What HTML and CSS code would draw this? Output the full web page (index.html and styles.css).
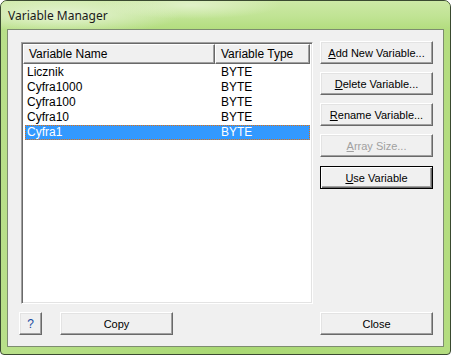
FILE: index.html
```html
<!DOCTYPE html>
<html>
<head>
    <title>Variable Manager</title>
    <link rel="stylesheet" href="styles.css">
</head>
<body>
    <div class="window">
        <div class="titlebar">Variable Manager</div>
        <div class="client">
            <div class="main">
                <div class="listbox">
                    <div class="list-header">
                        <div class="col-name">Variable Name</div>
                        <div class="col-type">Variable Type</div>
                    </div>
                    <div class="row"><span class="cell-name">Licznik</span><span class="cell-type">BYTE</span></div>
                    <div class="row"><span class="cell-name">Cyfra1000</span><span class="cell-type">BYTE</span></div>
                    <div class="row"><span class="cell-name">Cyfra100</span><span class="cell-type">BYTE</span></div>
                    <div class="row"><span class="cell-name">Cyfra10</span><span class="cell-type">BYTE</span></div>
                    <div class="row selected"><span class="cell-name">Cyfra1</span><span class="cell-type">BYTE</span></div>
                </div>
                <div class="actions">
                    <button class="btn"><u>A</u>dd New Variable...</button>
                    <button class="btn"><u>D</u>elete Variable...</button>
                    <button class="btn"><u>R</u>ename Variable...</button>
                    <button class="btn disabled"><u>A</u>rray Size...</button>
                    <button class="btn default"><u>U</u>se Variable</button>
                </div>
            </div>
            <div class="footer">
                <button class="btn help">?</button>
                <button class="btn copy">Copy</button>
                <div class="spacer"></div>
                <button class="btn close">Close</button>
            </div>
        </div>
    </div>
</body>
</html>
```

FILE: styles.css
```css
html, body {
    margin: 0;
    padding: 0;
    background-color: #ffffff;
}

.window {
    width: 451px;
    height: 355px;
    box-sizing: border-box;
    border: 1px solid #3a4a30;
    border-radius: 7px 7px 4px 4px;
    background: linear-gradient(90deg, #b9e08a 0%, #a9d873 50%, #b4dd80 100%);
    display: flex;
    flex-direction: column;
    overflow: hidden;
    font-family: "Liberation Sans", Arial, sans-serif;
}

.titlebar {
    height: 28px;
    padding-left: 7px;
    line-height: 29px;
    font-family: "Noto Sans", "DejaVu Sans", sans-serif;
    font-size: 12px;
    color: #1a1a1a;
    background:
        radial-gradient(ellipse 120px 20px at 60px 14px, rgba(235, 246, 220, 0.9), rgba(235, 246, 220, 0)),
        radial-gradient(ellipse 90px 14px at 190px 4px, rgba(230, 244, 210, 0.8), rgba(230, 244, 210, 0)),
        linear-gradient(180deg, #cde9a6 0%, #bfe392 60%, #b3dd7f 100%);
}

.client {
    flex: 1;
    margin: 0 6px 7px 6px;
    border: 1px solid #7d8c70;
    background-color: #f0f0f0;
    padding: 12px 10px 11px 13px;
    display: flex;
    flex-direction: column;
}

.main {
    flex: 1;
    display: flex;
    gap: 7px;
}

.listbox {
    width: 292px;
    box-sizing: border-box;
    background-color: #ffffff;
    border-top: 1px solid #a0a0a0;
    border-left: 1px solid #a0a0a0;
    border-right: 1px solid #ffffff;
    border-bottom: 1px solid #ffffff;
    box-shadow: inset 1px 1px 0 #696969, inset -1px -1px 0 #e3e3e3;
    padding: 1px 2px 0 1px;
    font-size: 12px;
    color: #000000;
}

.list-header {
    display: flex;
    height: 20px;
    margin-bottom: 1px;
}

.col-name,
.col-type {
    box-sizing: border-box;
    background-color: #f0f0f0;
    border-top: 1px solid #ffffff;
    border-left: 1px solid #ffffff;
    border-right: 1px solid #696969;
    border-bottom: 1px solid #696969;
    box-shadow: inset -1px -1px 0 #a0a0a0;
    padding-left: 5px;
    line-height: 18px;
}

.col-name {
    width: 194px;
}

.col-type {
    width: 96px;
}

.row {
    display: flex;
    height: 15px;
    line-height: 15px;
    margin-left: 2px;
}

.cell-name {
    width: 192px;
    padding-left: 2px;
}

.cell-type {
    flex: 1;
    padding-left: 2px;
}

.row.selected {
    background-color: #3399ff;
    color: #ffffff;
    outline: 1px dotted #e07010;
    outline-offset: -1px;
}

.actions {
    width: 113px;
    display: flex;
    flex-direction: column;
    gap: 8px;
    margin-top: -1px;
}

.btn {
    height: 23px;
    box-sizing: border-box;
    background-color: #f0f0f0;
    border-top: 1px solid #ffffff;
    border-left: 1px solid #ffffff;
    border-right: 1px solid #696969;
    border-bottom: 1px solid #696969;
    box-shadow: inset -1px -1px 0 #a0a0a0, inset 1px 1px 0 #e3e3e3;
    font-family: "Liberation Sans", Arial, sans-serif;
    font-size: 11px;
    color: #000000;
    padding: 0;
    margin: 0;
}

.btn.disabled {
    color: #a0a0a0;
}

.btn.default {
    border: 1px solid #000000;
    box-shadow: inset 1px 1px 0 #ffffff, inset -1px -1px 0 #696969, inset -2px -2px 0 #a0a0a0;
    margin-top: 1px;
}

.footer {
    display: flex;
    margin-top: 8px;
    height: 23px;
}

.help {
    width: 23px;
    font-size: 12px;
    color: #1a4aa0;
    margin-left: -2px;
}

.copy {
    width: 113px;
    margin-left: 18px;
}

.spacer {
    flex: 1;
}

.close {
    width: 113px;
}
```
